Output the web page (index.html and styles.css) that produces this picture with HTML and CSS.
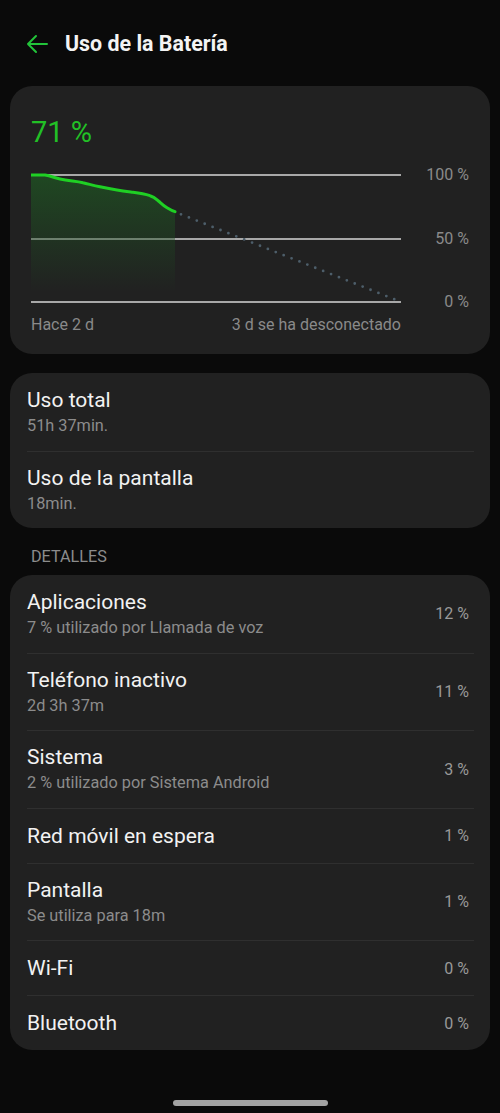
FILE: index.html
```html
<!DOCTYPE html>
<html lang="es">
<head>
<meta charset="utf-8">
<title>Uso de la Batería</title>
<link rel="stylesheet" href="styles.css">
</head>
<body>
<div class="screen">
  <header class="topbar">
    <svg class="back" width="22" height="22" viewBox="0 0 22 22" aria-hidden="true">
      <path d="M2 11 H21 M10 3 L2 11 L10 19" fill="none" stroke="#22c43a" stroke-width="2" stroke-linecap="round" stroke-linejoin="round"/>
    </svg>
    <h1 class="title">Uso de la Batería</h1>
  </header>

  <section class="card chart-card">
    <div class="level">71 %</div>
    <div class="chart-row">
      <svg class="chart" width="370" height="137" viewBox="0 0 370 137" aria-hidden="true">
        <defs>
          <linearGradient id="fillg" x1="0" y1="0" x2="0" y2="1">
            <stop offset="0" stop-color="#1f4a22" stop-opacity="0.95"/>
            <stop offset="1" stop-color="#1f4a22" stop-opacity="0"/>
          </linearGradient>
        </defs>
        <line x1="0" y1="5" x2="370" y2="5" stroke="#d6d6d6" stroke-width="1.5"/>
        <line x1="0" y1="69" x2="370" y2="69" stroke="#d6d6d6" stroke-width="1.5"/>
        <line x1="0" y1="132" x2="370" y2="132" stroke="#d6d6d6" stroke-width="1.5"/>
        <path d="M0 5 L14 5 C20 6 24 8 29 9 C38 11 45 11 52 12.7 C58 14 63 16 69 16.7 C75 18 80 19 86 20 C92 21 96 21.5 102 22.3 C108 23 114 24 119 25.7 C124 27 126 30 129 32.3 C132 35 134 36.5 136 37.7 C139 39.5 141 40.7 144 41.7 L144 122 L0 122 Z" fill="url(#fillg)"/>
        <path d="M0 5 L14 5 C20 6 24 8 29 9 C38 11 45 11 52 12.7 C58 14 63 16 69 16.7 C75 18 80 19 86 20 C92 21 96 21.5 102 22.3 C108 23 114 24 119 25.7 C124 27 126 30 129 32.3 C132 35 134 36.5 136 37.7 C139 39.5 141 40.7 144 41.7" fill="none" stroke="#1fd024" stroke-width="3" stroke-linecap="round" stroke-linejoin="round"/>
        <line x1="150" y1="44.3" x2="369" y2="131.5" stroke="#4d5e6a" stroke-width="2.8" stroke-linecap="round" stroke-dasharray="0 8.5"/>
      </svg>
      <div class="axis">
        <span>100 %</span>
        <span>50 %</span>
        <span>0 %</span>
      </div>
    </div>
    <div class="chart-foot">
      <span>Hace 2 d</span>
      <span>3 d se ha desconectado</span>
    </div>
  </section>

  <section class="card list usage">
    <div class="row two">
      <div class="text"><div class="name">Uso total</div><div class="sub">51h 37min.</div></div>
    </div>
    <div class="row two">
      <div class="text"><div class="name">Uso de la pantalla</div><div class="sub">18min.</div></div>
    </div>
  </section>

  <div class="section-label">DETALLES</div>

  <section class="card list">
    <div class="row two">
      <div class="text"><div class="name">Aplicaciones</div><div class="sub">7 % utilizado por Llamada de voz</div></div>
      <div class="value">12 %</div>
    </div>
    <div class="row two">
      <div class="text"><div class="name">Teléfono inactivo</div><div class="sub">2d 3h 37m</div></div>
      <div class="value">11 %</div>
    </div>
    <div class="row two">
      <div class="text"><div class="name">Sistema</div><div class="sub">2 % utilizado por Sistema Android</div></div>
      <div class="value">3 %</div>
    </div>
    <div class="row one">
      <div class="text"><div class="name">Red móvil en espera</div></div>
      <div class="value">1 %</div>
    </div>
    <div class="row two">
      <div class="text"><div class="name">Pantalla</div><div class="sub">Se utiliza para 18m</div></div>
      <div class="value">1 %</div>
    </div>
    <div class="row one">
      <div class="text"><div class="name">Wi-Fi</div></div>
      <div class="value">0 %</div>
    </div>
    <div class="row one">
      <div class="text"><div class="name">Bluetooth</div></div>
      <div class="value">0 %</div>
    </div>
  </section>

  <div class="home-bar"></div>
</div>
</body>
</html>
```

FILE: styles.css
```css
* { box-sizing: border-box; }

html, body {
  margin: 0;
  padding: 0;
  background: #0a0a0a;
}

body {
  font-family: Roboto, "Noto Sans", "Liberation Sans", sans-serif;
  color: #f2f2f2;
  width: 500px;
  height: 1113px;
  overflow: hidden;
}

.screen {
  display: flex;
  flex-direction: column;
  height: 1113px;
}

.topbar {
  height: 86px;
  display: flex;
  align-items: center;
  padding-left: 26px;
  padding-top: 1px;
  gap: 17px;
}

.back { display: block; }

.title {
  margin: 0;
  font-size: 21.4px;
  font-weight: 700;
  line-height: 28px;
  color: #f4f4f4;
}

.card {
  margin: 0 10px;
  background: #212121;
  border-radius: 22px;
}

.chart-card {
  padding: 28px 21px 19px 21px;
}

.level {
  font-size: 29px;
  line-height: 36px;
  color: #22c026;
  font-weight: 400;
}

.chart-row {
  margin-top: 20px;
  display: flex;
}

.chart { display: block; }

.axis {
  flex: 1;
  height: 137px;
  display: flex;
  flex-direction: column;
  justify-content: space-between;
  align-items: flex-end;
  font-size: 16px;
  line-height: 10px;
  color: #8a8a8a;
}

.chart-foot {
  width: 370px;
  margin-top: 8px;
  display: flex;
  justify-content: space-between;
  font-size: 16px;
  line-height: 20px;
  color: #8a8a8a;
}

.list {
  padding: 0 16px 0 17px;
}

.usage {
  margin-top: 19px;
}

.row {
  display: grid;
  grid-template-columns: 1fr auto;
  align-items: center;
  border-top: 1px solid #2f2f2f;
  padding-right: 5px;
}

.row:first-child { border-top: none; }

.row.two { height: 77.5px; padding-top: 1px; }
.row.one { height: 55px; padding-top: 1px; }

.name {
  font-size: 21px;
  line-height: 25px;
  color: #f2f2f2;
}

.sub {
  margin-top: 2px;
  font-size: 16.3px;
  line-height: 22px;
  color: #8c8c8c;
}

.value {
  font-size: 16px;
  line-height: 20px;
  color: #999999;
}

.section-label {
  margin: 19px 0 8px 31px;
  font-size: 16.2px;
  line-height: 20px;
  color: #8c8c8c;
}

.home-bar {
  width: 155px;
  height: 6px;
  border-radius: 3px;
  background: #a3a3a3;
  margin: auto auto 7px auto;
}
```
